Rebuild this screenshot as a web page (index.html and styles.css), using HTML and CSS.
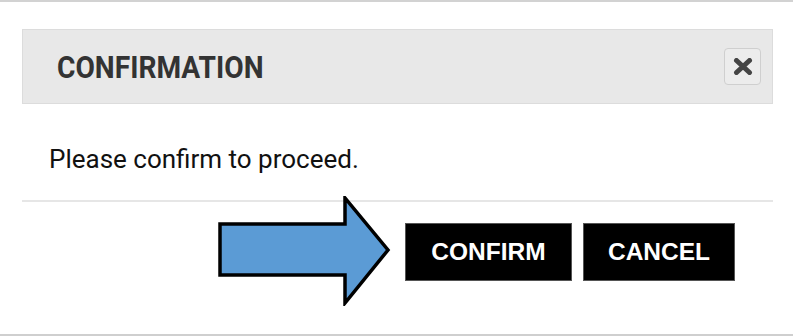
FILE: index.html
```html
<!DOCTYPE html>
<html lang="en">
<head>
<meta charset="UTF-8">
<meta name="viewport" content="width=device-width, initial-scale=1.0">
<title>Confirmation</title>
<link rel="stylesheet" href="styles.css">
</head>
<body>
<div class="frame">
  <div class="modal-header">
    <h2><span>CONFIRMATION</span></h2>
    <button class="close-btn" type="button" aria-label="Close">
      <svg width="20" height="17" viewBox="0 0 20 17">
        <path d="M3.5 2.5 L16.5 14.5 M16.5 2.5 L3.5 14.5" stroke="#444" stroke-width="5" stroke-linecap="round"/>
      </svg>
    </button>
  </div>
  <div class="modal-body">
    <p>Please confirm to proceed.</p>
  </div>
  <div class="modal-footer">
    <button class="btn btn-confirm" type="button">CONFIRM</button>
    <button class="btn btn-cancel" type="button">CANCEL</button>
  </div>
  <svg class="pointer" width="174" height="110" viewBox="0 0 174 110">
    <polygon points="2,28 127,28 127,2 170,54 127,107 127,79 2,79" fill="#5b9bd5" stroke="#000" stroke-width="3.5"/>
  </svg>
</div>
</body>
</html>
```

FILE: styles.css
```css
body {
  margin: 0;
  padding: 0;
  background: #fff;
  font-family: Roboto, "Liberation Sans", Arial, sans-serif;
  color: #111;
}
.frame {
  position: relative;
  height: 336px;
  box-sizing: border-box;
  border-top: 2px solid #d2d2d2;
  border-bottom: 2px solid #cfcfcf;
  padding: 27px 20px 0 22px;
}
.modal-header {
  display: flex;
  align-items: center;
  justify-content: space-between;
  height: 75px;
  box-sizing: border-box;
  padding: 0 11px 0 34px;
  background-color: #e8e8e8;
  border: 1px solid #dcdcdc;
}
.modal-header h2 {
  margin: 0;
  font-size: 32px;
  font-weight: 700;
  line-height: 40px;
  color: #333;
}
.modal-header h2 span {
  display: inline-block;
  transform: scaleX(0.88);
  transform-origin: left center;
}
.close-btn {
  width: 37px;
  height: 37px;
  padding: 0;
  display: flex;
  align-items: center;
  justify-content: center;
  background-color: #ececec;
  border: 1px solid #cfcfcf;
  border-radius: 4px;
  cursor: pointer;
}
.modal-body {
  padding: 39px 27px 25px 27px;
  border-bottom: 2px solid #e6e6e6;
}
.modal-body p {
  margin: 0;
  font-size: 26px;
  line-height: 32px;
}
.modal-footer {
  display: flex;
  justify-content: flex-end;
  gap: 11px;
  padding: 21px 38px 0 0;
}
.btn {
  height: 58px;
  padding: 0;
  background-color: #000;
  color: #fff;
  border: 1px solid #555;
  font-family: "Liberation Sans", Arial, sans-serif;
  font-weight: 700;
  font-size: 24.5px;
  text-align: center;
  cursor: pointer;
}
.btn-confirm {
  width: 167px;
}
.btn-cancel {
  width: 152px;
}
.pointer {
  position: absolute;
  left: 218px;
  top: 194px;
}
```
